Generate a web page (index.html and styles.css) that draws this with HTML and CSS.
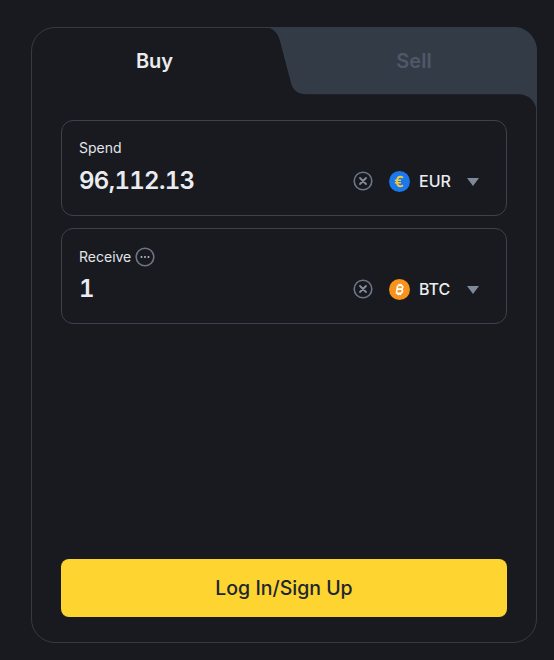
FILE: index.html
```html
<!DOCTYPE html>
<html lang="en">
<head>
    <meta charset="UTF-8">
    <meta name="viewport" content="width=device-width, initial-scale=1.0">
    <title>Buy Crypto</title>
    <link rel="stylesheet" href="styles.css">
</head>
<body>
    <div class="card">
        <div class="tabs">
            <svg class="tab-shape" width="506" height="90" viewBox="0 0 506 90">
                <path d="M231 0 C241 0 246 6 248 14 L259 56 C261 63.500 266 67.300 274 67.300 L486 67.300 C498 67.300 504 75 505 86 L505 24 C505 11 495 0 482 0 Z" fill="#333b47"/>
            </svg>
            <div class="tab tab-buy">Buy</div>
            <div class="tab tab-sell">Sell</div>
        </div>
        <div class="content">
            <div class="field">
                <div class="field-label">Spend</div>
                <div class="field-row">
                    <div class="amount">96,112.13</div>
                    <svg class="clear" width="20" height="20" viewBox="0 0 20 20">
                        <circle cx="10" cy="10" r="8.800" fill="none" stroke="#6c7686" stroke-width="1.600"/>
                        <path d="M7 7 L13 13 M13 7 L7 13" stroke="#848e9c" stroke-width="1.800" stroke-linecap="round"/>
                    </svg>
                    <svg class="coin" width="21" height="21" viewBox="0 0 21 21">
                        <circle cx="10.500" cy="10.500" r="10.500" fill="#1a77ec"/>
                        <path d="M14 6.800 C13 6 12.100 5.700 11.300 5.700 C9.200 5.700 8 7.600 8 10.500 C8 13.400 9.200 15.300 11.300 15.300 C12.100 15.300 13 15 14 14.200" fill="none" stroke="#f0c93a" stroke-width="2"/>
                        <path d="M5.800 9.300 H12 M5.800 11.700 H12" stroke="#f0c93a" stroke-width="1.400"/>
                    </svg>
                    <div class="coin-name">EUR</div>
                    <div class="caret"></div>
                </div>
            </div>
            <div class="field">
                <div class="field-label field-label-info">
                    Receive
                    <svg class="info" width="20" height="20" viewBox="0 0 20 20">
                        <circle cx="10" cy="10" r="8.800" fill="none" stroke="#6c7686" stroke-width="1.600"/>
                        <circle cx="6.500" cy="10" r="1" fill="#b7bdc6"/>
                        <circle cx="10" cy="10" r="1" fill="#b7bdc6"/>
                        <circle cx="13.500" cy="10" r="1" fill="#b7bdc6"/>
                    </svg>
                </div>
                <div class="field-row">
                    <div class="amount">1</div>
                    <svg class="clear" width="20" height="20" viewBox="0 0 20 20">
                        <circle cx="10" cy="10" r="8.800" fill="none" stroke="#6c7686" stroke-width="1.600"/>
                        <path d="M7 7 L13 13 M13 7 L7 13" stroke="#848e9c" stroke-width="1.800" stroke-linecap="round"/>
                    </svg>
                    <svg class="coin" width="21" height="21" viewBox="0 0 21 21">
                        <circle cx="10.500" cy="10.500" r="10.500" fill="#f7931a"/>
                        <path d="M8.700 6.300 L7.300 14.700 M9.200 6.500 H11.800 C13.400 6.500 14 7.300 13.800 8.300 C13.600 9.500 12.600 10.100 11.300 10.100 H8.700 M11.300 10.100 C13 10.100 13.700 11 13.500 12.200 C13.300 13.600 12.200 14.400 10.700 14.400 H7.700 M10.200 4.800 L9.900 6.500 M12.100 4.800 L11.800 6.500 M9.500 14.500 L9.200 16.200 M11.400 14.500 L11.100 16.200" fill="none" stroke="#fff" stroke-width="1.600"/>
                    </svg>
                    <div class="coin-name">BTC</div>
                    <div class="caret"></div>
                </div>
            </div>
            <button class="login">Log In/Sign Up</button>
        </div>
    </div>
</body>
</html>
```

FILE: styles.css
```css
body{
    margin:0;
    padding: 27px 17px 17px 31px;
    background-color: #181a20;
    font-family: Inter, "Noto Sans", sans-serif;
    color: #eaecef;
}
.card{
    position: relative;
    box-sizing: border-box;
    width: 506px;
    height: 616px;
    display: flex;
    flex-direction: column;
    border: 1px solid #333b47;
    border-radius: 24px;
}
.tabs{
    position: relative;
    display: flex;
    height: 67px;
}
.tab-shape{
    position: absolute;
    top: -1px;
    left: 0;
}
.tab{
    position: relative;
    display: flex;
    align-items: center;
    justify-content: center;
    padding-bottom: 2px;
    font-size: 20px;
    font-weight: 600;
}
.tab-buy{
    width: 245px;
}
.tab-sell{
    flex: 1;
    padding-left: 15px;
    color: #4f5867;
}
.content{
    flex: 1;
    display: flex;
    flex-direction: column;
    gap: 12px;
    padding: 25px 29px 25px;
}
.field{
    box-sizing: border-box;
    height: 96px;
    padding: 17px 25px 0 17px;
    border: 1px solid #3a4250;
    border-radius: 12px;
}
.field-label{
    display: flex;
    align-items: center;
    gap: 5px;
    height: 20px;
    font-size: 14px;
    line-height: 20px;
    color: #e2e5e9;
}
.field-label-info{
    gap: 4px;
    margin-top: 1px;
    margin-bottom: -1px;
}
.field-row{
    display: flex;
    align-items: center;
    height: 32px;
    margin-top: 7px;
}
.amount{
    flex: 1;
    padding-bottom: 2px;
    font-size: 24px;
    font-weight: 600;
    letter-spacing: -0.700px;
    font-variant-numeric: tabular-nums;
}
.clear{
    margin-right: 16px;
}
.coin{
    margin-right: 9px;
}
.coin-name{
    width: 32px;
    font-size: 16px;
    font-weight: 500;
}
.caret{
    width: 0;
    height: 0;
    margin-left: 16px;
    margin-top: 1px;
    margin-right: 2px;
    border-left: 6px solid transparent;
    border-right: 6px solid transparent;
    border-top: 8px solid #7f8999;
}
.login{
    margin-top: auto;
    height: 58px;
    padding-bottom: 2px;
    border: 0;
    border-radius: 8px;
    background-color: #fed430;
    color: #202630;
    font-family: inherit;
    font-size: 19.500px;
    font-weight: 500;
}
```
